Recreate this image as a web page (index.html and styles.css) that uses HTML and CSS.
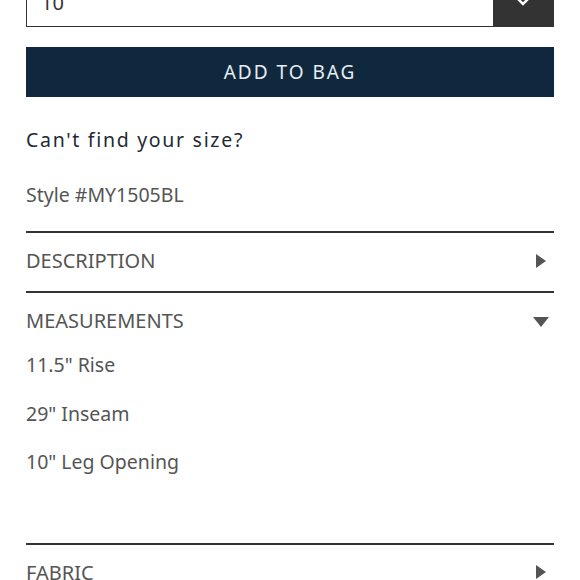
FILE: index.html
```html
<!DOCTYPE html>
<html>
<head>
<meta charset="utf-8">
<link rel="stylesheet" href="styles.css">
</head>
<body>
<div class="page">
  <div class="select">
    <span class="select-value">10</span>
    <span class="select-btn"><svg width="14" height="10" viewBox="0 0 14 10"><path d="M1 1 L7 7 L13 1" fill="none" stroke="#fff" stroke-width="2.5"/></svg></span>
  </div>
  <button class="add-btn">ADD TO BAG</button>
  <p class="cant-find">Can't find your size?</p>
  <p class="style-no">Style #MY1505BL</p>
  <div class="acc">
    <div class="acc-head"><span>DESCRIPTION</span><span class="tri-right"></span></div>
  </div>
  <div class="acc">
    <div class="acc-head"><span>MEASUREMENTS</span><span class="tri-down"></span></div>
    <div class="acc-body">
      <p>11.5" Rise</p>
      <p>29" Inseam</p>
      <p>10" Leg Opening</p>
    </div>
  </div>
  <div class="acc">
    <div class="acc-head"><span>FABRIC</span><span class="tri-right"></span></div>
  </div>
</div>
</body>
</html>
```
FILE: styles.css
```css
html, body { margin: 0; padding: 0; background: #fff; }
body { font-family: "Noto Sans", "Open Sans", sans-serif; overflow: hidden; }
.page { padding: 0 26px; }
.select {
  margin-top: -23px;
  height: 50px;
  box-sizing: border-box;
  border: 1px solid #333;
  display: flex;
  align-items: center;
  justify-content: space-between;
}
.select-value { padding-left: 14px; font-size: 20px; color: #333; }
.select-btn {
  width: 60px; height: 100%;
  background: #333;
  display: flex; align-items: center; justify-content: center;
}
.add-btn {
  display: block;
  width: 100%;
  margin-top: 20px;
  height: 50px;
  background: #0f283d;
  border: none;
  color: #e8edf2;
  font-family: "Noto Sans", "Open Sans", sans-serif;
  font-size: 19px;
  letter-spacing: 2px;
  padding: 0;
}
.cant-find {
  margin: 30px 0 0;
  font-size: 19.5px;
  line-height: 26px;
  letter-spacing: 1.7px;
  color: #1f2a36;
}
.style-no {
  margin: 29px 0 0;
  font-size: 19.5px;
  line-height: 26px;
  color: #555;
}
.acc { border-top: 2px solid #333; }
.style-no + .acc { margin-top: 23px; }
.acc-head {
  height: 58px;
  display: flex;
  align-items: center;
  justify-content: space-between;
  font-size: 20px;
  color: #555;
}
.acc-head > span:first-child { margin-top: -3px; }
.tri-right {
  width: 0; height: 0;
  margin-right: 8px;
  margin-top: -3px;
  border-top: 7px solid transparent;
  border-bottom: 7px solid transparent;
  border-left: 10px solid #555;
}
.tri-down {
  width: 0; height: 0;
  margin-right: 5px;
  border-left: 8px solid transparent;
  border-right: 8px solid transparent;
  border-top: 10px solid #555;
}
.acc-body { padding-bottom: 56px; }
.acc-body p {
  margin: 0;
  font-size: 19.5px;
  line-height: 48.5px;
  color: #555;
}
.acc-body p:first-child { margin-top: -10px; }
```
